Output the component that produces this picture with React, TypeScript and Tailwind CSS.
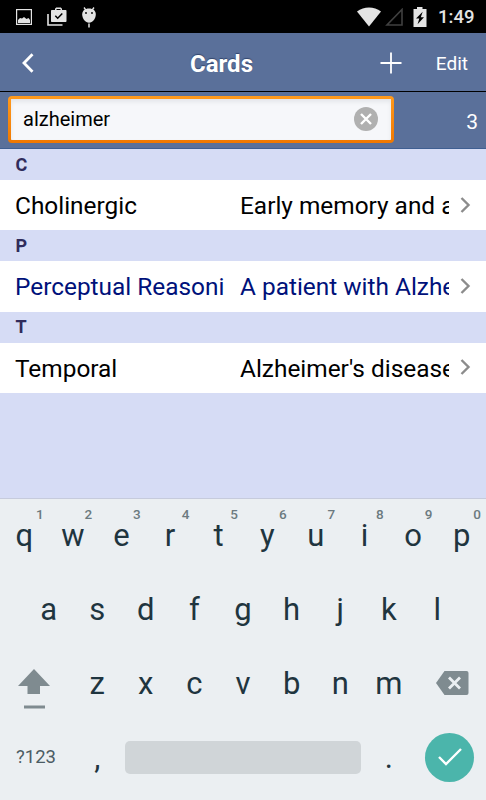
const sections = [
  { letter: 'C', term: 'Cholinergic', definition: 'Early memory and a', highlighted: false },
  { letter: 'P', term: 'Perceptual Reasoni', definition: 'A patient with Alzhe', highlighted: true },
  { letter: 'T', term: 'Temporal', definition: "Alzheimer's disease", highlighted: false },
];

const topRow = [
  { key: 'q', hint: '1' },
  { key: 'w', hint: '2' },
  { key: 'e', hint: '3' },
  { key: 'r', hint: '4' },
  { key: 't', hint: '5' },
  { key: 'y', hint: '6' },
  { key: 'u', hint: '7' },
  { key: 'i', hint: '8' },
  { key: 'o', hint: '9' },
  { key: 'p', hint: '0' },
];

const homeRow = ['a', 's', 'd', 'f', 'g', 'h', 'j', 'k', 'l'];
const bottomRow = ['z', 'x', 'c', 'v', 'b', 'n', 'm'];

function StatusBar() {
  return (
    <div className="flex h-[33px] shrink-0 items-center bg-black text-[#e4e4e4]">
      <svg width="16" height="16" viewBox="0 0 16 16" className="ml-4" fill="none">
        <rect x="0.6" y="0.6" width="14.8" height="14.8" stroke="currentColor" strokeWidth="1.2" />
        <path d="M2 14v-3l2-2 2 .5L8 8l2.5 2 2-1 1.5 2v3z" fill="currentColor" />
      </svg>
      <svg width="20" height="19" viewBox="0 0 20 19" className="mb-px ml-[15px]" fill="none">
        <path d="M1 7v11h14.5" stroke="currentColor" strokeWidth="1.6" />
        <path
          fillRule="evenodd"
          d="M5 3h3V1.8L9.2.6h4.6L15 1.8V3h3.500c.6 0 1 .4 1 1v10c0 .6-.4 1-1 1H5c-.6 0-1-.4-1-1V4c0-.6.4-1 1-1zm4.500 0h4V2h-4z"
          fill="currentColor"
        />
        <path d="M8.300 8.800l2.400 2.400 4.600-4.700" stroke="#000" strokeWidth="1.500" />
      </svg>
      <svg width="14" height="21" viewBox="0 0 14 21" className="mt-px ml-[15px]" fill="none">
        <path d="M2 .5l2.200 3M12 .5l-2.200 3" stroke="currentColor" strokeWidth="1.300" />
        <path d="M7 1.500c4.200 0 6.800 2.200 6.800 5.900 0 4.300-3.300 8.300-6.800 8.300S.2 11.700.2 7.400C.2 3.700 2.800 1.500 7 1.500z" fill="currentColor" />
        <circle cx="4" cy="6" r="0.900" fill="#000" />
        <circle cx="10" cy="6" r="0.900" fill="#000" />
        <path d="M7 16.500v4" stroke="currentColor" strokeWidth="1.500" />
      </svg>
      <svg width="24" height="20" viewBox="0 0 24 20" className="ml-auto">
        <path d="M0 4.500C7 -.8 17 -.8 24 4.500L12 19.500z" fill="currentColor" />
      </svg>
      <svg width="18" height="18" viewBox="0 0 18 18" className="mt-px ml-[4px]" fill="none">
        <path d="M17 1.500V17H2z" stroke="#404040" strokeWidth="1.600" />
      </svg>
      <svg width="14" height="20" viewBox="0 0 14 20" className="ml-[10px]">
        <path d="M4 0h5.500v2H13.500v18H.5V2H4z" fill="currentColor" />
        <path d="M9.700 4.800L3 11.500h3.300L4.600 17.300l6.400-7H7.800z" fill="#000" />
      </svg>
      <span className="mt-[2px] mr-[11px] ml-[11px] w-[37px] text-[18.500px] leading-none font-medium whitespace-nowrap">1:49</span>
    </div>
  );
}

function Header() {
  return (
    <header className="flex h-[59px] shrink-0 items-center border-b border-black bg-[#5a709a] pt-px text-white">
      <svg width="14" height="22" viewBox="0 0 14 22" className="ml-[21px]" fill="none">
        <path d="M11.500 2.300L3 11l8.500 8.700" stroke="currentColor" strokeWidth="2.800" />
      </svg>
      <h1 className="mt-[2px] ml-[155px] text-[24px] leading-none font-bold [text-shadow:0_-1px_1px_#33466e]">Cards</h1>
      <svg width="22" height="22" viewBox="0 0 22 22" className="ml-auto" fill="none">
        <path d="M11 0.500v21M0.500 11h21" stroke="currentColor" strokeWidth="1.800" />
      </svg>
      <button className="mt-px mr-[18px] ml-[34px] text-[19px] leading-none">Edit</button>
    </header>
  );
}

function SearchBar() {
  return (
    <div className="flex h-[57px] shrink-0 items-center border-b border-[#3f5f92] bg-[#5a709a] pl-[8px]">
      <div className="mb-px flex h-[47px] w-[386px] rounded-[4px] bg-linear-to-b from-[#ff9a1c] to-[#f07800] p-[3px]">
        <div className="flex flex-1 items-center justify-between rounded-[1px] bg-[#f6f7fa] pr-[13px] pb-px pl-[12px] shadow-[inset_0_3px_4px_#e4e6ea]">
          <span className="text-[20px] leading-none text-black">alzheimer</span>
          <svg width="24" height="24" viewBox="0 0 24 24" className="mb-px" fill="none">
            <circle cx="12" cy="12" r="12" fill="#b0b0b0" />
            <path d="M7 7l10 10M17 7L7 17" stroke="#fff" strokeWidth="2.400" />
          </svg>
        </div>
      </div>
      <span className="mt-[4px] mr-[8px] ml-auto text-[21px] leading-none text-white">3</span>
    </div>
  );
}

function CardList() {
  return (
    <main className="h-[349px] shrink-0 bg-[#d6dcf5]">
      {sections.map((section) => (
        <section key={section.letter}>
          <h2 className="flex h-[31px] items-center pl-[15.500px] text-[18px] leading-none font-bold text-[#302c5c]">
            {section.letter}
          </h2>
          <div
            className={`flex h-[50.400px] items-center bg-white pt-[2px] pl-[15px] text-[24.400px] whitespace-nowrap ${section.highlighted ? 'text-[#00117a]' : 'text-black'}`}
          >
            <span className="w-[209px] overflow-hidden">{section.term}</span>
            <span className="ml-[16px] w-[209px] overflow-hidden">{section.definition}</span>
            <svg width="11" height="16" viewBox="0 0 11 16" className="mb-[3px] ml-[11px]" fill="none">
              <path d="M1.500 1L8.500 8l-7 7" stroke="#8c8c8c" strokeWidth="2.400" />
            </svg>
          </div>
        </section>
      ))}
    </main>
  );
}

function Keyboard() {
  return (
    <div className="flex-1 border-t border-[#c6cbdc] bg-[#ebeff2] text-[31px] leading-none text-[#1f353f]">
      <div className="flex h-[72px]">
        {topRow.map(({ key, hint }) => (
          <div key={key} className="relative flex flex-1 items-center justify-center">
            {key}
            <span className="absolute top-[9px] right-[5px] text-[13.500px] leading-none font-medium text-[#6b7a80]">{hint}</span>
          </div>
        ))}
      </div>
      <div className="flex h-[76px] px-[24.300px]">
        {homeRow.map((key) => (
          <div key={key} className="flex flex-1 items-center justify-center">
            {key}
          </div>
        ))}
      </div>
      <div className="flex h-[73px]">
        <div className="flex w-[72.900px] flex-col items-start pt-[22px] pl-[18px]">
          <svg width="32" height="40" viewBox="0 0 32 40" fill="#7f8b90">
            <path d="M16 0l16 17H22v8H9.500v-8H0z" />
            <path d="M6 36.500h21v3H6z" />
          </svg>
        </div>
        {bottomRow.map((key) => (
          <div key={key} className="flex flex-1 items-center justify-center">
            {key}
          </div>
        ))}
        <div className="flex w-[72.900px] items-center pb-[2px] pl-[23px]">
          <svg width="33" height="24" viewBox="0 0 33 24" fill="none">
            <path d="M8.500 0H30.500Q32.500 0 32.500 2V22Q32.500 24 30.500 24H8.500L0 12z" fill="#7f8b90" />
            <path d="M13 6.500l11 11M24 6.500l-11 11" stroke="#ebeff2" strokeWidth="2.800" />
          </svg>
        </div>
      </div>
      <div className="flex h-[74px] items-center">
        <div className="w-[72.900px] pl-[16px] text-[18.500px] leading-none text-[#4b5c64]">?123</div>
        <div className="w-[48.600px] text-center">,</div>
        <div className="mx-[4px] h-[33px] flex-1 rounded-[5px] bg-[#d0d5d8]" />
        <div className="w-[48.600px] text-center">.</div>
        <div className="flex w-[72.900px] justify-center">
          <div className="flex size-[49px] items-center justify-center rounded-full bg-[#4bb5ab]">
            <svg width="24" height="18" viewBox="0 0 24 18" fill="none">
              <path d="M1 9l7 7L23 1" stroke="#fff" strokeWidth="2.400" />
            </svg>
          </div>
        </div>
      </div>
    </div>
  );
}

export default function App() {
  return (
    <div className="flex h-[800px] w-[486px] flex-col overflow-hidden font-[Roboto,'Liberation_Sans',sans-serif]">
      <StatusBar />
      <Header />
      <SearchBar />
      <CardList />
      <Keyboard />
    </div>
  );
}
